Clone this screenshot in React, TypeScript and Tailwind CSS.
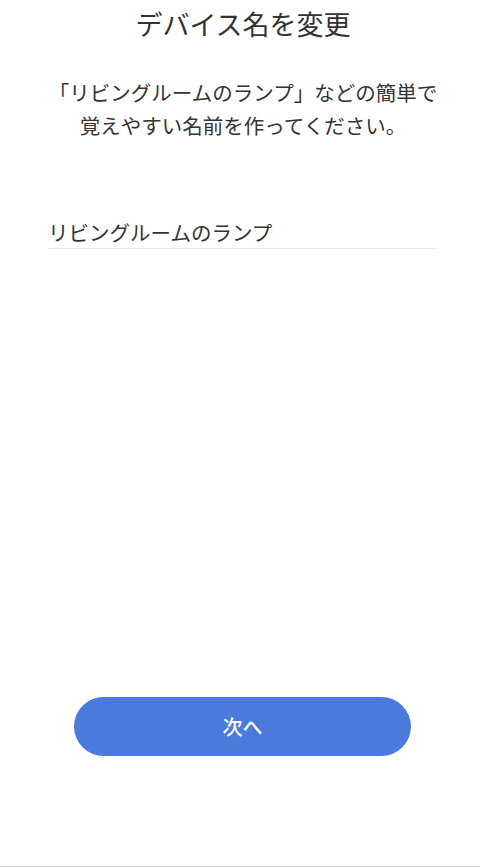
export default function App() {
  return (
    <main
      className="flex h-[867px] w-[480px] flex-col bg-white text-[#333333] border-b border-[#cfcfcf]"
      style={{ fontFamily: '"Noto Sans CJK JP", "Noto Sans", sans-serif' }}
    >
      <h1 className="mt-[6px] text-center text-[27px] leading-[36px] pl-[6px]">デバイス名を変更</h1>

      <p className="mt-[34px] text-center text-[20.5px] leading-[33px] pl-[6px]">
        「リビングルームのランプ」などの簡単で
        <br />
        覚えやすい名前を作ってください。
      </p>

      <div className="ml-[48px] mr-[43px] mt-[75px] border-b border-[#ececec] pb-[1px]">
        <p className="text-[20.5px] leading-[30px]">リビングルームのランプ</p>
      </div>

      <div className="flex-1" />

      <button className="mb-[110px] ml-[74px] h-[59px] w-[337px] rounded-full bg-[#4a7adb] text-[20px] font-medium text-white">
        次へ
      </button>
    </main>
  );
}
